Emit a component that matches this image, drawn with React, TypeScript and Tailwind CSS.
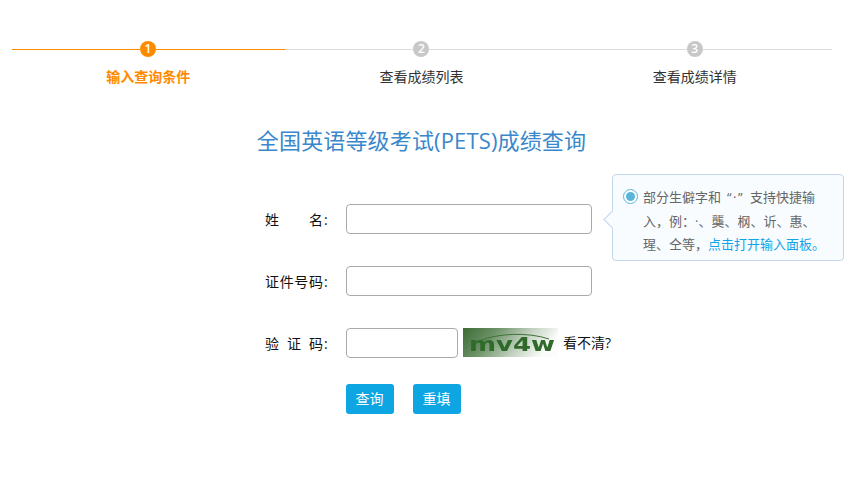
import React from "react";

const font = { fontFamily: '"Open Sans", "Noto Sans CJK SC", sans-serif' };

const steps = [
  { num: 1, label: "输入查询条件", active: true },
  { num: 2, label: "查看成绩列表", active: false },
  { num: 3, label: "查看成绩详情", active: false },
];

function Captcha() {
  return (
    <svg width="95" height="29" viewBox="0 0 95 29" className="ml-[5px] block shrink-0 self-start">
      <defs>
        <linearGradient id="cap" x1="0" y1="0" x2="1" y2="0.25">
          <stop offset="0" stopColor="#3b6b35" />
          <stop offset="0.35" stopColor="#6d9268" />
          <stop offset="0.7" stopColor="#c3d2c0" />
          <stop offset="1" stopColor="#fbfcfb" />
        </linearGradient>
      </defs>
      <rect width="95" height="29" fill="url(#cap)" />
      <path d="M16 13 C35 5 65 4 86 11" fill="none" stroke="#3f7038" strokeWidth="1" />
      <text
        x="6"
        y="23"
        textLength="86"
        lengthAdjust="spacingAndGlyphs"
        fontSize="19"
        fontWeight="700"
        fill="#2f6a2a"
        className="blur-[0.4px]"
        style={{ fontFamily: '"DejaVu Sans", sans-serif' }}
      >
        mv4w
      </text>
    </svg>
  );
}

function Label({ chars }: { chars: string[] }) {
  return (
    <div className="flex w-[81px] shrink-0 items-center text-[14px] text-[#111]">
      <span className="flex w-[58px] justify-between">
        {chars.map((c) => (
          <span key={c}>{c}</span>
        ))}
      </span>
      <span className="ml-[1px]">:</span>
    </div>
  );
}

export default function App() {
  return (
    <div className="relative h-[494px] w-[852px] overflow-hidden bg-white" style={font}>
      {/* steps */}
      <div className="ml-[12px] flex w-[820px] pt-[41px]">
        {steps.map((s) => (
          <div key={s.num} className="flex flex-1 flex-col items-center">
            <div className="flex h-4 w-full items-center">
              <div className={`h-px w-[128px] shrink-0 ${s.active ? "bg-[#ff8a00]" : "bg-[#ddd]"}`} />
              <div
                className={`flex h-4 w-4 shrink-0 items-center justify-center rounded-full text-[12px] font-semibold leading-none text-white ${
                  s.active ? "bg-[#ff8a00]" : "bg-[#c8c8c8]"
                }`}
              >
                {s.num}
              </div>
              <div className={`h-px flex-1 ${s.active ? "bg-[#ff8a00]" : "bg-[#ddd]"}`} />
            </div>
            <div
              className={`mt-[10px] pr-[1px] text-[14px] leading-[20px] ${
                s.active ? "font-bold text-[#ff8a00]" : "text-[#333]"
              }`}
            >
              {s.label}
            </div>
          </div>
        ))}
      </div>

      <h1 className="mt-[37px] pr-[9px] text-center text-[22px] leading-[32px] tracking-[0.15px] text-[#3a87cc]">
        全国英语等级考试(PETS)成绩查询
      </h1>

      {/* form */}
      <div className="mt-[48px] flex flex-col pl-[265px]">
        <div className="flex h-[30px] items-center">
          <Label chars={["姓", "名"]} />
          <input className="h-[30px] w-[246px] rounded-[4px] border border-[#aaa] bg-white" />
        </div>
        <div className="mt-[32px] flex h-[30px] items-center">
          <Label chars={["证", "件", "号", "码"]} />
          <input className="h-[30px] w-[246px] rounded-[4px] border border-[#aaa] bg-white" />
        </div>
        <div className="mt-[32px] flex h-[30px] items-center">
          <Label chars={["验", "证", "码"]} />
          <input className="h-[30px] w-[112px] rounded-[4px] border border-[#aaa] bg-white" />
          <Captcha />
          <span className="mb-[2px] ml-[5px] text-[14px] text-[#111]">看不清?</span>
        </div>
        <div className="mt-[26px] flex gap-[19px] pl-[81px]">
          <button className="h-[30px] w-[48px] rounded-[3px] bg-[#0ea5e3] pb-[2px] pr-[1px] text-[14px] text-white">查询</button>
          <button className="h-[30px] w-[48px] rounded-[3px] bg-[#0ea5e3] pb-[2px] pr-[1px] text-[14px] text-white">重填</button>
        </div>
      </div>

      {/* tip popover */}
      <div className="absolute left-[612px] top-[174px] h-[87px] w-[232px] rounded-[4px] border border-[#c5d5ec] bg-[#f8fcff] pl-[30px] pt-[11px] text-[13px] leading-[23.5px] text-[#666] [text-spacing-trim:space-all]">
        <div className="absolute left-[-7px] top-[38px] h-[13px] w-[13px] rotate-45 border-b border-l border-[#c5d5ec] bg-[#f8fcff]" />
        <span className="absolute left-[10px] top-[14px] flex h-[15px] w-[15px] items-center justify-center rounded-full border border-[#5bb5d8] bg-white">
          <span className="h-[9px] w-[9px] rounded-full bg-[#5bb5d8]" />
        </span>
        <p className="whitespace-nowrap">
          部分生僻字和<span className="mx-[6px] tracking-[1.5px]">“·”</span>支持快捷输
          <br />
          入，例：·、龑、㭎、䜣、惠、
          <br />
          瑆、仝等，<span className="text-[#12a4e8]">点击打开输入面板。</span>
        </p>
      </div>
    </div>
  );
}
